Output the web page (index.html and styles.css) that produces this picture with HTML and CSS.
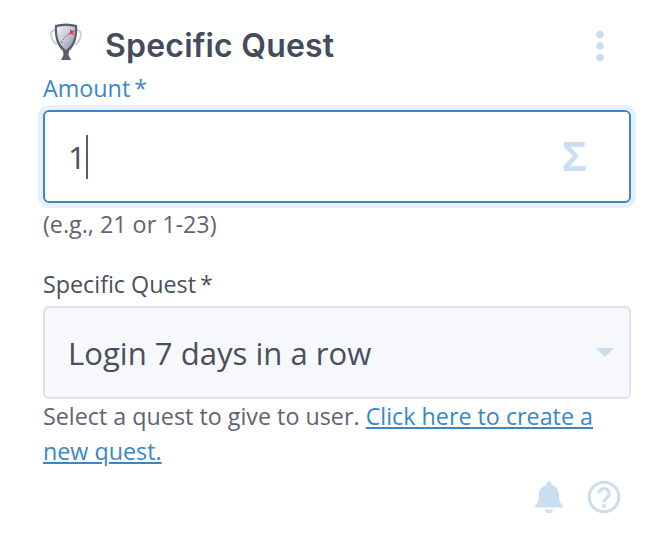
FILE: index.html
```html
<!DOCTYPE html>
<html lang="en">
<head>
    <meta charset="UTF-8">
    <meta name="viewport" content="width=device-width, initial-scale=1.0">
    <title>Specific Quest</title>
    <link rel="stylesheet" href="styles.css">
</head>
<body>
    <div class="panel">
        <div class="panel-head">
            <svg class="trophy" width="36" height="40" viewBox="0 0 36 40">
                <defs>
                    <linearGradient id="cup" x1="0" y1="0" x2="1" y2="1">
                        <stop offset="0" stop-color="#f2f3f8"/>
                        <stop offset="0.55" stop-color="#c0c4d2"/>
                        <stop offset="1" stop-color="#858a9b"/>
                    </linearGradient>
                </defs>
                <path d="M7 8C1 9 2 17 9 23M29 8C35 9 34 17 27 23" fill="none" stroke="#cdd1dc" stroke-width="2"/>
                <path d="M7 3Q18 0 29 3C30 15 27 24 21 29L20.500 33L23 38H13L15.500 33L15 29C9 24 6 15 7 3Z" fill="#5a5f6d"/>
                <path d="M9 5Q18 3 27 5C27.500 15 25 23 18 28C11 23 8.500 15 9 5Z" fill="url(#cup)"/>
                <path d="M13 21L18 14L24 9" fill="none" stroke="#6d7284" stroke-width="1" stroke-dasharray="2 1.500"/>
                <path d="M22 7L24 9L27 8L25 11L26 13L23 12L21 13L22 10Z" fill="#e0394a"/>
            </svg>
            <h1>Specific Quest</h1>
            <svg class="more" width="10" height="32" viewBox="0 0 10 32">
                <circle cx="5" cy="4.500" r="3.700"/>
                <circle cx="5" cy="16" r="3.700"/>
                <circle cx="5" cy="27.500" r="3.700"/>
            </svg>
        </div>

        <div class="field">
            <label class="label label-active">Amount<span class="req">*</span></label>
            <div class="box box-focus">
                <span class="value">1</span><span class="caret"></span>
                <span class="sigma">Σ</span>
            </div>
            <p class="hint hint-amount">(e.g., 21 or 1-23)</p>
        </div>

        <div class="field">
            <label class="label">Specific Quest<span class="req">*</span></label>
            <div class="box box-select">
                <span class="value">Login 7 days in a row</span>
                <span class="arrow"></span>
            </div>
            <p class="hint">Select a quest to give to user. <a href="#">Click here to create a new quest.</a></p>
        </div>

        <div class="panel-foot">
            <svg width="30" height="34" viewBox="0 0 30 34">
                <path d="M15 1.500a2.500 2.500 0 0 1 2.500 2.500v1C22.500 6 25 10 25 15c0 6 1.500 8.500 4 11v1.500H1V26c2.500-2.500 4-5 4-11C5 10 7.500 6 12.500 5V4A2.500 2.500 0 0 1 15 1.500zM11 29.500h8a4 3.500 0 0 1-8 0z"/>
            </svg>
            <svg width="34" height="34" viewBox="0 0 34 34">
                <circle class="ring" cx="17" cy="17" r="14.800"/>
                <path class="ring" d="M12 13.500a5 5 0 1 1 7.800 4.200c-1.800 1.200-2.800 2-2.800 4.300"/>
                <circle cx="17" cy="26" r="2"/>
            </svg>
        </div>
    </div>
</body>
</html>
```

FILE: styles.css
```css
body {
    font-family: "Open Sans", Arial, sans-serif;
    background-color: #fff;
    color: #4a4f5e;
    margin: 0;
}
.panel {
    width: 588px;
    padding: 20px 30px 0 43px;
}
.panel-head {
    display: flex;
    align-items: center;
    height: 52px;
}
.trophy {
    margin: -8px 0 0 5px;
}
h1 {
    flex: 1;
    margin: -2px 0 0 21px;
    font-family: Inter, "Liberation Sans", sans-serif;
    font-size: 32px;
    font-weight: 600;
    letter-spacing: 0.2px;
    color: #454b5c;
}
.more {
    margin-right: 26px;
    fill: #c9dfef;
}
.field {
    margin-top: 1px;
}
.label {
    display: block;
    font-size: 23.300px;
    line-height: 30px;
}
.label-active {
    color: #3a87c8;
}
.req {
    margin-left: 4px;
}
.box {
    display: flex;
    align-items: center;
    box-sizing: border-box;
    border-radius: 6px;
    padding: 0 23px;
    font-size: 31.100px;
}
.box-focus {
    height: 93px;
    margin-top: 7px;
    border: 2px solid #3d85c6;
    box-shadow: 0 0 0 5px #e6f0f8;
}
.box-select {
    height: 93px;
    margin-top: 7px;
    border: 2px solid #e0e1ec;
    background-color: #f7f8fb;
}
.caret {
    width: 2px;
    height: 44px;
    margin-left: 0;
    background-color: #5a5f6e;
}
.sigma {
    margin-left: auto;
    margin-right: 19px;
    font-family: "Liberation Sans", sans-serif;
    font-size: 42px;
    font-weight: 700;
    color: #c9dfef;
}
.arrow {
    margin-left: auto;
    margin-right: -8px;
    border-left: 9px solid transparent;
    border-right: 9px solid transparent;
    border-top: 9px solid #c9dfef;
}
.hint {
    margin: 0;
    font-size: 23.300px;
    line-height: 35px;
    color: #5f6472;
}
.hint-amount {
    margin: 6px 0 30px;
    line-height: 30px;
}
.hint a {
    color: #3a87c8;
}
.panel-foot {
    display: flex;
    justify-content: flex-end;
    align-items: center;
    gap: 23px;
    margin: 11px 10px 0 0;
    fill: #c9dfef;
}
.ring {
    fill: none;
    stroke: #c9dfef;
    stroke-width: 3;
}
```
